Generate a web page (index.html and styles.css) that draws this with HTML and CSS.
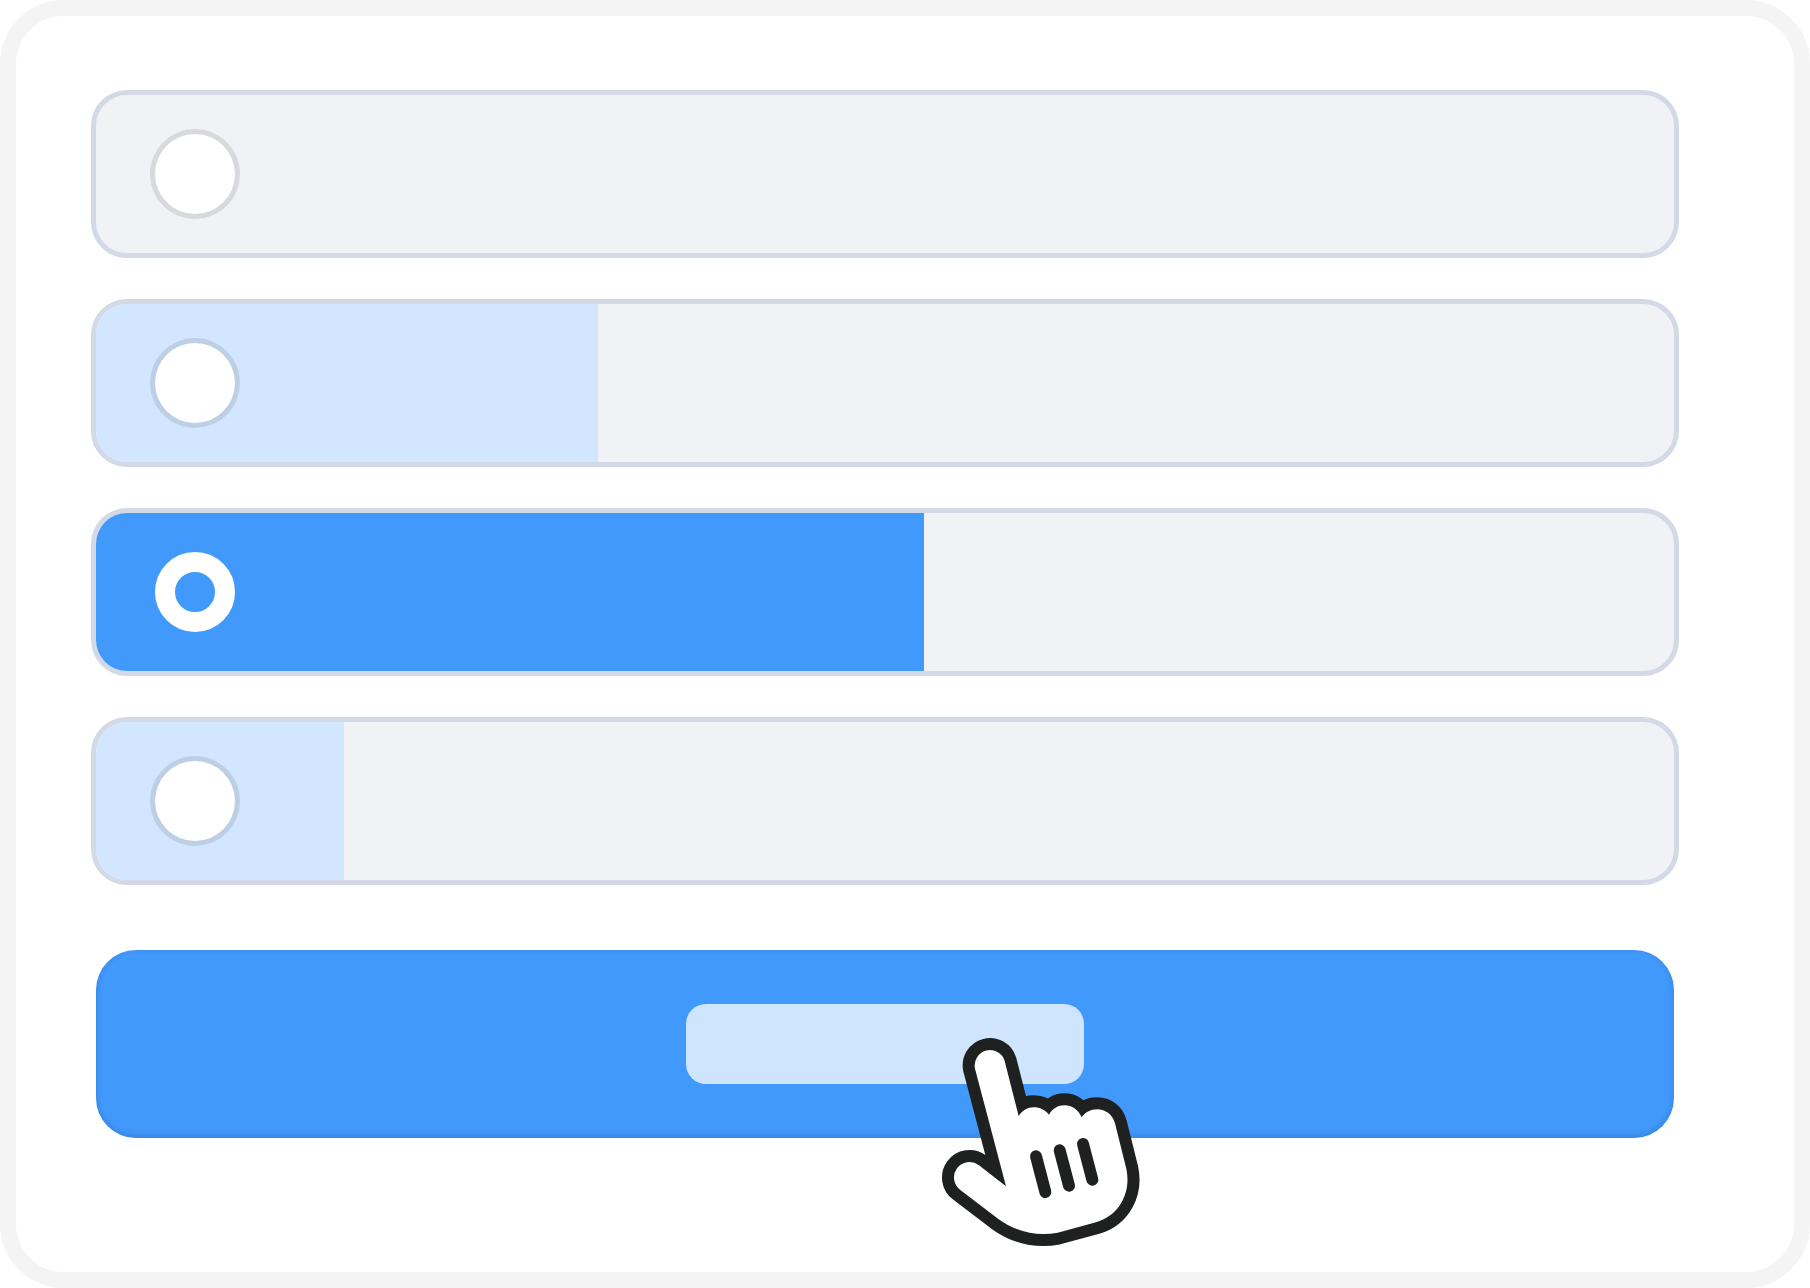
FILE: index.html
```html
<!DOCTYPE html>
<html lang="en">
<head>
	<meta charset="UTF-8">
	<meta name="viewport" content="width=device-width, initial-scale=1">
	<title>Poll</title>
	<link rel="stylesheet" href="styles.css">
</head>
<body>
	<form class="poll">
		<div class="options">
			<label class="option">
				<span class="bar" style="width: 0%;"></span>
				<input type="radio" name="vote" value="1" aria-label="Option 1">
			</label>
			<label class="option">
				<span class="bar" style="width: 31.8%;"></span>
				<input type="radio" name="vote" value="2" aria-label="Option 2">
			</label>
			<label class="option">
				<span class="bar" style="width: 52.5%;"></span>
				<input type="radio" name="vote" value="3" aria-label="Option 3" checked>
			</label>
			<label class="option">
				<span class="bar" style="width: 15.7%;"></span>
				<input type="radio" name="vote" value="4" aria-label="Option 4">
			</label>
		</div>
		<button type="button" class="submit" aria-label="Vote">
			<span class="caption"></span>
			<svg class="hand" viewBox="68 56 594 627" aria-hidden="true">
				<path class="palm" d="M167 148 A46 46 0 0 1 256 125 L298 290 C309 273 325 264 343 264 C361 264 378 272 389 286 C399 268 416 258 435 258 C458 258 478 272 487 294 C497 279 514 270 533 270 C559 270 580 286 587 312 L621 448 C636 518 602 588 530 609 L415 640 C352 652 290 637 236 598 L123 512 A46 46 0 0 1 178 437 L260 501 Z"/>
				<path class="lines" d="M350 411 L378 518 M421 393 L449 499 M491 374 L519 481"/>
			</svg>
		</button>
	</form>
</body>
</html>
```
FILE: styles.css
```css
* {
	box-sizing: border-box;
}
body {
	margin: 0;
	background: #fff;
}
.poll {
	display: flex;
	flex-direction: column;
	min-height: 100vh;
	padding: 74px 115px 74px 75px;
	border: 16px solid #f4f4f4;
	border-radius: 64px;
	background: #fff;
}
/* options */
.options {
	display: grid;
	gap: 41px;
}
.option {
	display: grid;
	align-items: center;
	height: 168px;
	border: 5px solid #d3d9e6;
	border-radius: 36px;
	background: #f0f2f6;
	overflow: hidden;
	cursor: pointer;
}
/* bar and radio share one cell */
.option .bar,
.option input {
	grid-area: 1 / 1;
}
.bar {
	height: 100%;
	background: #d2e7ff;
}
.option input {
	appearance: none;
	width: 90px;
	height: 90px;
	margin: 0 0 0 54px;
	border: 5px solid rgba(0, 0, 0, .1);
	border-radius: 50%;
	background: #fff;
	background-clip: padding-box;
	cursor: pointer;
}
.option:has(input:checked) .bar {
	background: #4199fb;
}
.option input:checked {
	width: 80px;
	height: 80px;
	margin-left: 59px;
	border: 20px solid #fff;
	background: #4199fb;
}
/* button */
.submit {
	position: relative;
	display: flex;
	align-items: center;
	justify-content: center;
	height: 188px;
	margin: 65px 5px 0;
	padding: 0;
	border: 0;
	border-radius: 40px;
	background: #4199fb;
	box-shadow: inset 0 -2px 6px rgba(0, 40, 80, .2);
	cursor: pointer;
}
.caption {
	width: 398px;
	height: 80px;
	border-radius: 20px;
	background: #cfe5fe;
}
/* pointer lies over the button */
.hand {
	position: absolute;
	top: 88px;
	left: calc(50% + 57px);
	width: 198px;
	height: 209px;
	overflow: visible;
}
.palm {
	fill: #fff;
	stroke: #1e2120;
	stroke-width: 72;
	paint-order: stroke;
}
.lines {
	fill: none;
	stroke: #1e2120;
	stroke-width: 36;
	stroke-linecap: round;
}
```
